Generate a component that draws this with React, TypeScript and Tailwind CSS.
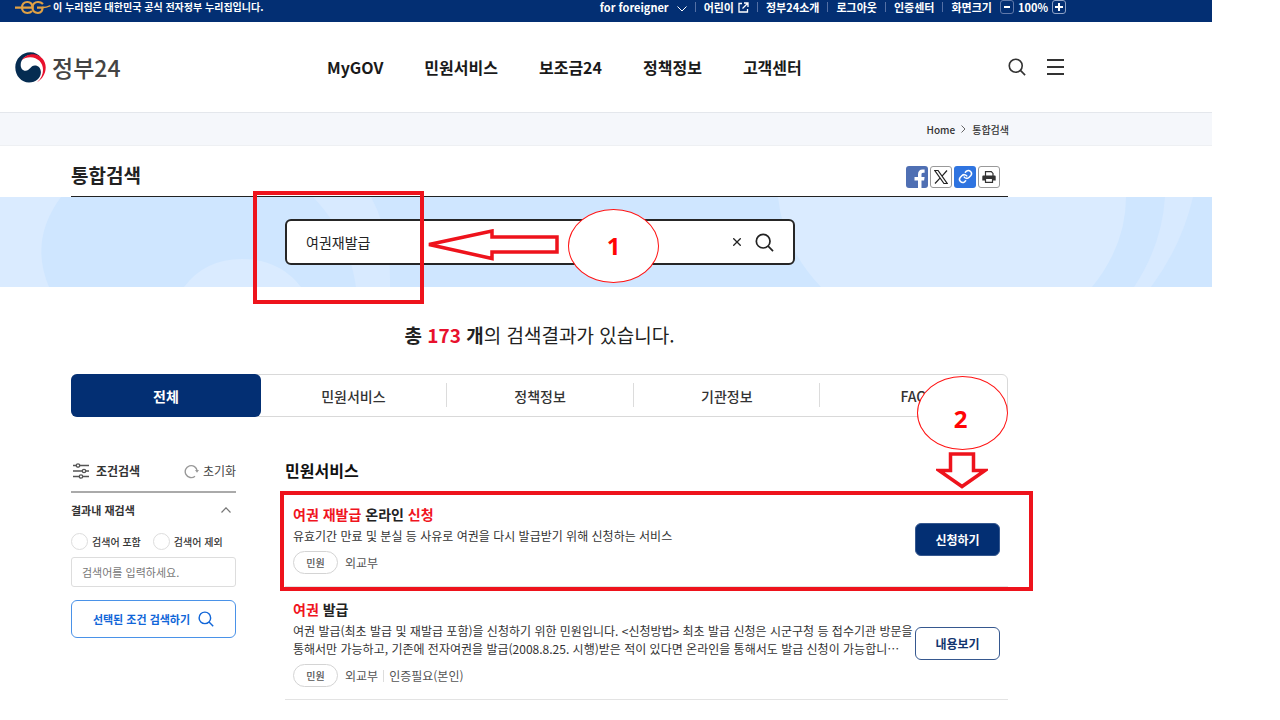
import { useState, ReactNode } from 'react';

// ── Data ──────────────────────────────────────────────────────────────────
const MENU = ['MyGOV', '민원서비스', '보조금24', '정책정보', '고객센터'];
const TABS = ['전체', '민원서비스', '정책정보', '기관정보', 'FAQ'];

interface Result {
  title: { text: string; hit: boolean }[];
  desc: string;
  meta: string[];
  action: string;
  primary: boolean;
}

const RESULTS: Result[] = [
  {
    title: [
      { text: '여권 재발급', hit: true },
      { text: ' 온라인 ', hit: false },
      { text: '신청', hit: true },
    ],
    desc: '유효기간 만료 및 분실 등 사유로 여권을 다시 발급받기 위해 신청하는 서비스',
    meta: ['외교부'],
    action: '신청하기',
    primary: true,
  },
  {
    title: [
      { text: '여권', hit: true },
      { text: ' 발급', hit: false },
    ],
    desc: '여권 발급(최초 발급 및 재발급 포함)을 신청하기 위한 민원입니다. <신청방법> 최초 발급 신청은 시군구청 등 접수기관 방문을 통해서만 가능하고, 기존에 전자여권을 발급(2008.8.25. 시행)받은 적이 있다면 온라인을 통해서도 발급 신청이 가능합니⋯',
    meta: ['외교부', '인증필요(본인)'],
    action: '내용보기',
    primary: false,
  },
];

// ── Icons ─────────────────────────────────────────────────────────────────
function SearchIcon({ className }: { className: string }) {
  return (
    <svg viewBox="0 0 20 20" fill="none" stroke="currentColor" strokeWidth="1.8" className={className}>
      <circle cx="8.6" cy="8.6" r="7.2" />
      <path d="M13.8 13.8 19 19" />
    </svg>
  );
}

function EgMark() {
  return (
    <svg viewBox="0 0 36 15" fill="none" stroke="#e0a145" strokeWidth="2.2" className="h-[15px] w-9">
      <path d="M0 7.600h17.500C17.500 4 15.500 2 12.300 2S7 4.300 7 7.600s2.200 5.400 5.300 5.400c2 0 3.500-.6 4.700-2" />
      <path d="M28 4C26.500 2.500 25 2 23 2c-3.300 0-5.500 2.300-5.500 5.600S19.700 13 23 13c2.500 0 4.500-1.200 4.500-5.400H22" />
      <path d="M27 7.600c3.500 0 6-.8 8.500-2" strokeWidth="1.600" />
    </svg>
  );
}

function Taegeuk() {
  return (
    <svg viewBox="0 0 31 31" className="h-[31px] w-[31px]">
      <path d="M15.300 .3C7 .3 .3 7 .3 15.300.3 24 6.500 30.500 14 30.500c6.800 0 11.900-4.800 11.900-10.300 0-4-2.600-6.700-6.100-6.700-4.300 0-5 5.300-9.300 5.300-2.800 0-4.800-2.500-4.800-5.800C5.700 7 10.500 3.300 16 3c4-.2 7.500.5 10 2.500C23.500 2.300 19.800.3 15.300.3z" fill="#052c51" />
      <path d="M6.500 8.500C9.500 3.800 14.500 1.800 19 2.300c6.700.7 11.700 6.200 11.700 13 0 6.500-3.500 12-8.700 14.900 4-3.500 6-7.700 6-12.200C28 10.500 22.500 5.500 15.500 5.300c-3.500-.1-6.500 1-9 3.200z" fill="#e8112d" />
    </svg>
  );
}

function BannerArt() {
  return (
    <svg viewBox="0 0 1212 90" preserveAspectRatio="xMinYMin slice" className="absolute inset-0 h-full w-full">
      <path d="M0 0H61Q29 43 49 90H0z" fill="#daebff" />
      <path d="M184 90Q205 62 242 62T301 90z" fill="#daebff" />
      <path d="M313 0Q348 36 356 90H390Q391 36 371 0z" fill="#d8eaff" />
      <path d="M778 0Q783 50 821 90H1092Q1126 48 1126 0z" fill="#daebff" />
      <path d="M1165 0Q1162 48 1134 90H1151Q1182 48 1193 0z" fill="#d8eaff" />
    </svg>
  );
}

function Callout({ children, className }: { children: ReactNode; className: string }) {
  return (
    <div
      className={`absolute z-10 flex h-[74px] w-[91px] items-center justify-center rounded-[50%] border border-[#ff1414] bg-white [font-family:'Open_Sans',sans-serif] text-2xl font-bold text-[#ff0505] ${className}`}
    >
      {children}
    </div>
  );
}

const Divider = () => <span className="h-[10px] w-px bg-[#5470a5]" />;

// ── Header ────────────────────────────────────────────────────────────────
function TopBar() {
  return (
    <div className="h-[22px] bg-[#032f73] text-white">
      <div className="flex h-[14px] max-w-[1080px] items-center pr-[14px] pl-[15px] text-[11px] leading-[14px] font-bold whitespace-nowrap">
        <EgMark />
        <span className="ml-[2px] text-[10px]">이 누리집은 대한민국 공식 전자정부 누리집입니다.</span>
        <div className="ml-auto flex items-center gap-2">
          <button className="flex items-center gap-2">
            for foreigner
            <svg viewBox="0 0 10 6" fill="none" stroke="currentColor" className="mt-1 h-[6px] w-[10px]">
              <path d="M.5 .5 5 5 9.500 .5" />
            </svg>
          </button>
          <Divider />
          <a href="#" className="flex items-center gap-1">
            어린이
            <svg viewBox="0 0 11 11" fill="none" stroke="currentColor" strokeWidth="1.300" className="h-[11px] w-[11px]">
              <path d="M4 1.500H1v8.500h8.500V7M6 1h4v4M10 1 4.500 6.500" />
            </svg>
          </a>
          <Divider />
          <a href="#">정부24소개</a>
          <Divider />
          <a href="#">로그아웃</a>
          <Divider />
          <a href="#">인증센터</a>
          <Divider />
          <span>화면크기</span>
          <span className="flex items-center gap-1">
            <button aria-label="축소" className="flex h-[14px] w-[14px] items-center justify-center rounded-[3px] border border-[#6079aa]">
              <span className="h-[2px] w-[6px] bg-white" />
            </button>
            100%
            <button aria-label="확대" className="flex h-[14px] w-[14px] items-center justify-center rounded-[3px] border border-[#8ea2c6]">
              <svg viewBox="0 0 8 8" stroke="currentColor" strokeWidth="2" className="h-2 w-2">
                <path d="M4 0v8M0 4h8" />
              </svg>
            </button>
          </span>
        </div>
      </div>
    </div>
  );
}

function Header() {
  return (
    <header>
      <TopBar />
      <div className="border-b border-[#e4e7ec]">
        <div className="flex h-[90px] max-w-[1080px] items-center pr-4 pl-[15px]">
          <a href="#" className="flex w-[312px] items-center gap-[6px] text-[23px] font-medium text-[#444]">
            <Taegeuk />
            정부24
          </a>
          <nav className="flex gap-[41px] text-base font-bold text-[#1a1a1a]">
            {MENU.map(m => (
              <a key={m} href="#">{m}</a>
            ))}
          </nav>
          <div className="ml-auto flex items-center gap-[21px] text-[#333]">
            <button aria-label="검색">
              <SearchIcon className="h-[18px] w-[18px]" />
            </button>
            <button aria-label="전체메뉴">
              <svg viewBox="0 0 17 16" stroke="currentColor" strokeWidth="1.800" className="h-4 w-[17px]">
                <path d="M0 1h17M0 8h17M0 15h17" />
              </svg>
            </button>
          </div>
        </div>
      </div>
      <div className="border-b border-[#eef0f3] bg-[#f5f7fb]">
        <div className="flex h-8 max-w-[1080px] items-center justify-end gap-[6px] pr-[71px] text-[10px] font-medium text-[#333]">
          <a href="#">Home</a>
          <svg viewBox="0 0 5 8" fill="none" stroke="#666" className="h-2 w-[5px]">
            <path d="M.5 .5 4 4 .5 7.500" />
          </svg>
          <span>통합검색</span>
        </div>
      </div>
    </header>
  );
}

function ShareButtons() {
  return (
    <div className="flex gap-[2px] pr-2">
      <button aria-label="페이스북" className="h-[22px] w-[22px] overflow-hidden rounded-[3px] bg-[#4f6fb3]">
        <svg viewBox="0 0 22 22" fill="#fff" className="h-full w-full">
          <path d="M12 22v-7.500H8.500V11H12V8.500C12 5.300 13.800 3.500 16.600 3.500h2v3.200h-1.400c-1.300 0-1.700.7-1.700 1.900V11h3.100l-.5 3.500h-2.600V22z" />
        </svg>
      </button>
      <button aria-label="X" className="flex h-[22px] w-[22px] items-center justify-center rounded-[3px] border border-[#999] bg-white">
        <svg viewBox="0 0 14 14" fill="none" stroke="#222" className="h-[14px] w-[14px]">
          <path d="M.8 .5h3.200l9.200 13H10zM13 .5 7.800 6.300M6 8.200 1 13.500" strokeWidth="1.200" />
        </svg>
      </button>
      <button aria-label="링크 복사" className="flex h-[22px] w-[22px] items-center justify-center rounded-[3px] bg-[#2f74e0]">
        <svg viewBox="0 0 24 24" fill="none" stroke="#fff" strokeWidth="2.500" strokeLinecap="round" className="h-[15px] w-[15px]">
          <path d="M10 13a5 5 0 0 0 7.500.5l3-3a5 5 0 0 0-7-7l-1.700 1.700" />
          <path d="M14 11a5 5 0 0 0-7.500-.5l-3 3a5 5 0 0 0 7 7l1.700-1.700" />
        </svg>
      </button>
      <button aria-label="인쇄" className="flex h-[22px] w-[22px] items-center justify-center rounded-[3px] border border-[#999] bg-white">
        <svg viewBox="0 0 14 12" className="h-3 w-[14px]">
          <path d="M3.500 5V.7h5.800l1.700 1.700V5" fill="none" stroke="#333" strokeWidth="1.200" />
          <path d="M1.500 4.500h11c.8 0 1.200.6 1.200 1.200V9.500H.3V5.700c0-.6.4-1.200 1.200-1.200z" fill="#333" />
          <path d="M3.500 7.500h7v3.800h-7z" fill="#fff" stroke="#333" strokeWidth="1.200" />
        </svg>
      </button>
    </div>
  );
}

// ── Search banner ─────────────────────────────────────────────────────────
function SearchBanner() {
  const [query, setQuery] = useState('여권재발급');

  return (
    <div className="relative h-[90px] bg-[#cfe6ff]">
      <BannerArt />
      <form className="relative flex max-w-[1080px] justify-center pt-[22px]" onSubmit={e => e.preventDefault()}>
        <div className="flex h-[46px] w-[510px] items-center rounded-md border-2 border-[#262626] bg-white px-[19px] text-[#222]">
          <input
            aria-label="검색어"
            value={query}
            onChange={e => setQuery(e.target.value)}
            className="min-w-0 flex-1 text-sm outline-none"
          />
          <button type="button" aria-label="지우기" onClick={() => setQuery('')}>
            <svg viewBox="0 0 8 8" stroke="currentColor" strokeWidth="1.300" className="h-2 w-2">
              <path d="M.3 .3 7.700 7.700M7.700 .3 .3 7.700" />
            </svg>
          </button>
          <button aria-label="검색" className="ml-[14px]">
            <SearchIcon className="h-[19px] w-[19px]" />
          </button>
        </div>
      </form>

      {/* Step 1 */}
      <div className="absolute -top-[6px] left-[253px] z-10 h-[113px] w-[171px] border-4 border-[#ee131c]" />
      <svg viewBox="0 0 134 32" className="absolute top-8 left-[426px] z-10 h-8 w-[134px]">
        <path d="M3 15.500 66 2v6h65v15H66v6.500z" fill="#fff" stroke="#ee131c" strokeWidth="3.500" />
      </svg>
      <Callout className="top-3 left-[568px]">1</Callout>
    </div>
  );
}

// ── Tabs ──────────────────────────────────────────────────────────────────
function Tabs() {
  const [active, setActive] = useState(0);

  return (
    <div className="relative">
      <div role="tablist" className="flex h-[43px] items-stretch rounded-md border border-[#d9d9d9] text-sm font-medium text-[#333]">
        {TABS.map((t, i) => (
          <button
            key={t}
            role="tab"
            aria-selected={i === active}
            onClick={() => setActive(i)}
            className={`relative ${i === active ? '-m-px w-[190px] rounded-md bg-[#032f73] font-bold text-white' : 'flex-1'}`}
          >
            {t}
            {i !== active && i < TABS.length - 1 && (
              <span className="absolute top-2 right-0 h-6 w-px bg-[#dcdcdc]" />
            )}
          </button>
        ))}
      </div>

      {/* Step 2 */}
      <Callout className="top-[2px] right-0 pt-3 pr-1">2</Callout>
      <svg viewBox="0 0 52 38" className="absolute top-[77px] right-5 z-10 h-[38px] w-[52px]">
        <path d="M14.500 3h23v16.500H49L26 35.500 3 19.500h11.500z" fill="#fff" stroke="#ee131c" strokeWidth="3.500" />
      </svg>
    </div>
  );
}

// ── Filter column ─────────────────────────────────────────────────────────
function Filters() {
  return (
    <aside className="w-[165px] shrink-0 text-[#333]">
      <div className="flex h-[42px] items-center border-b-2 border-[#aaa] text-xs">
        <svg viewBox="0 0 16 16" fill="#fff" stroke="#555" strokeWidth="1.300" className="ml-[2px] h-4 w-4">
          <path d="M0 2.500h16M0 8h16M0 13.500h16" />
          <circle cx="5" cy="2.500" r="1.700" />
          <circle cx="11" cy="8" r="1.700" />
          <circle cx="8" cy="13.500" r="1.700" />
        </svg>
        <h3 className="ml-[7px] font-bold">조건검색</h3>
        <button className="ml-auto flex items-center gap-1 text-[#444]">
          <svg viewBox="0 0 15 15" fill="none" stroke="#999" strokeWidth="1.400" className="h-[15px] w-[15px]">
            <path d="M11 12.300A6 6 0 1 1 13.200 7" />
            <path d="M11 6h4l-2 2.800z" fill="#999" stroke="none" />
          </svg>
          초기화
        </button>
      </div>
      <button className="flex h-[34px] w-full items-center justify-between pr-[5px] text-[11px] font-bold">
        결과내 재검색
        <svg viewBox="0 0 10 6" fill="none" stroke="#777" strokeWidth="1.200" className="h-[6px] w-[10px]">
          <path d="M.5 5.500 5 .8 9.500 5.500" />
        </svg>
      </button>
      <div className="flex h-7 items-center gap-3 text-[10px] font-medium">
        <label className="flex items-center gap-1">
          <input type="radio" name="scope" className="h-[17px] w-[17px] appearance-none rounded-full border border-[#ddd] checked:border-4 checked:border-[#1769e0]" />
          검색어 포함
        </label>
        <label className="flex items-center gap-1">
          <input type="radio" name="scope" className="h-[17px] w-[17px] appearance-none rounded-full border border-[#ddd] checked:border-4 checked:border-[#1769e0]" />
          검색어 제외
        </label>
      </div>
      <input
        aria-label="결과내 검색어"
        placeholder="검색어를 입력하세요."
        className="mt-[2px] h-[30px] w-full rounded-[3px] border border-[#ddd] px-[10px] text-[11px] outline-none placeholder:text-[#777]"
      />
      <button className="mt-[13px] flex h-[38px] w-full items-center justify-center gap-2 rounded-md border border-[#4a92e8] text-[11px] font-bold text-[#1166d8]">
        선택된 조건 검색하기
        <SearchIcon className="h-4 w-4" />
      </button>
    </aside>
  );
}

// ── Results ───────────────────────────────────────────────────────────────
function ResultItem({ item, marked }: { item: Result; marked: boolean }) {
  return (
    <li className="relative flex items-center justify-between border-b border-[#e3e3e3] pt-[10px] pr-2 pb-3 pl-2">
      <div className="w-[620px] shrink-0 break-keep">
        <h3 className="text-sm leading-6 font-bold text-[#222]">
          {item.title.map(part => (
            <span key={part.text} className={part.hit ? 'text-[#f0141e]' : ''}>{part.text}</span>
          ))}
        </h3>
        <p className="mt-px text-xs leading-[18px] text-[#333]">{item.desc}</p>
        <div className="mt-[6px] flex items-center text-xs text-[#555]">
          <span className="mr-[7px] flex h-[23px] w-[45px] items-center justify-center rounded-full border border-[#d4d4d4] text-[10px] font-medium">
            민원
          </span>
          {item.meta.map((m, i) => (
            <span key={m} className="flex items-center">
              {i > 0 && <span className="mx-[5px] h-3 w-px bg-[#ddd]" />}
              {m}
            </span>
          ))}
        </div>
      </div>
      <button
        className={`mt-[3px] h-[33px] w-[85px] rounded-md border border-[#36588f] text-xs font-bold
          ${item.primary ? 'bg-[#032f73] text-white' : 'bg-white text-[#12356f]'}`}
      >
        {item.action}
      </button>
      {marked && <div className="absolute -top-px -right-[25px] -bottom-[5px] -left-[5px] border-4 border-[#ee131c]" />}
    </li>
  );
}

export default function App() {
  return (
    <div lang="ko" className="bg-white pr-[68px] font-['Noto_Sans_CJK_KR',sans-serif]">
      <Header />
      <main>
        <div className="max-w-[1080px] pr-[72px] pl-[71px]">
          <div className="flex h-[51px] items-center justify-between border-b border-[#222] pt-[11px]">
            <h1 className="pb-1 text-[19px] leading-7 font-bold text-[#222]">통합검색</h1>
            <ShareButtons />
          </div>
        </div>

        <SearchBanner />

        <div className="max-w-[1080px] pr-[72px] pl-[71px]">
          <p className="pt-[34px] pb-[25px] text-center text-[19px] leading-7 text-[#222]">
            <strong>총 <span className="text-[#e8112d]">173</span> 개</strong>의 검색결과가 있습니다.
          </p>

          <Tabs />

          <div className="mt-[34px] flex gap-[49px]">
            <Filters />
            <section className="flex-1">
              <h2 className="h-[41px] pt-[7px] text-base leading-6 font-bold text-[#111]">민원서비스</h2>
              <ul>
                {RESULTS.map((r, i) => (
                  <ResultItem key={r.action} item={r} marked={i === 0} />
                ))}
              </ul>
            </section>
          </div>
        </div>
      </main>
    </div>
  );
}
